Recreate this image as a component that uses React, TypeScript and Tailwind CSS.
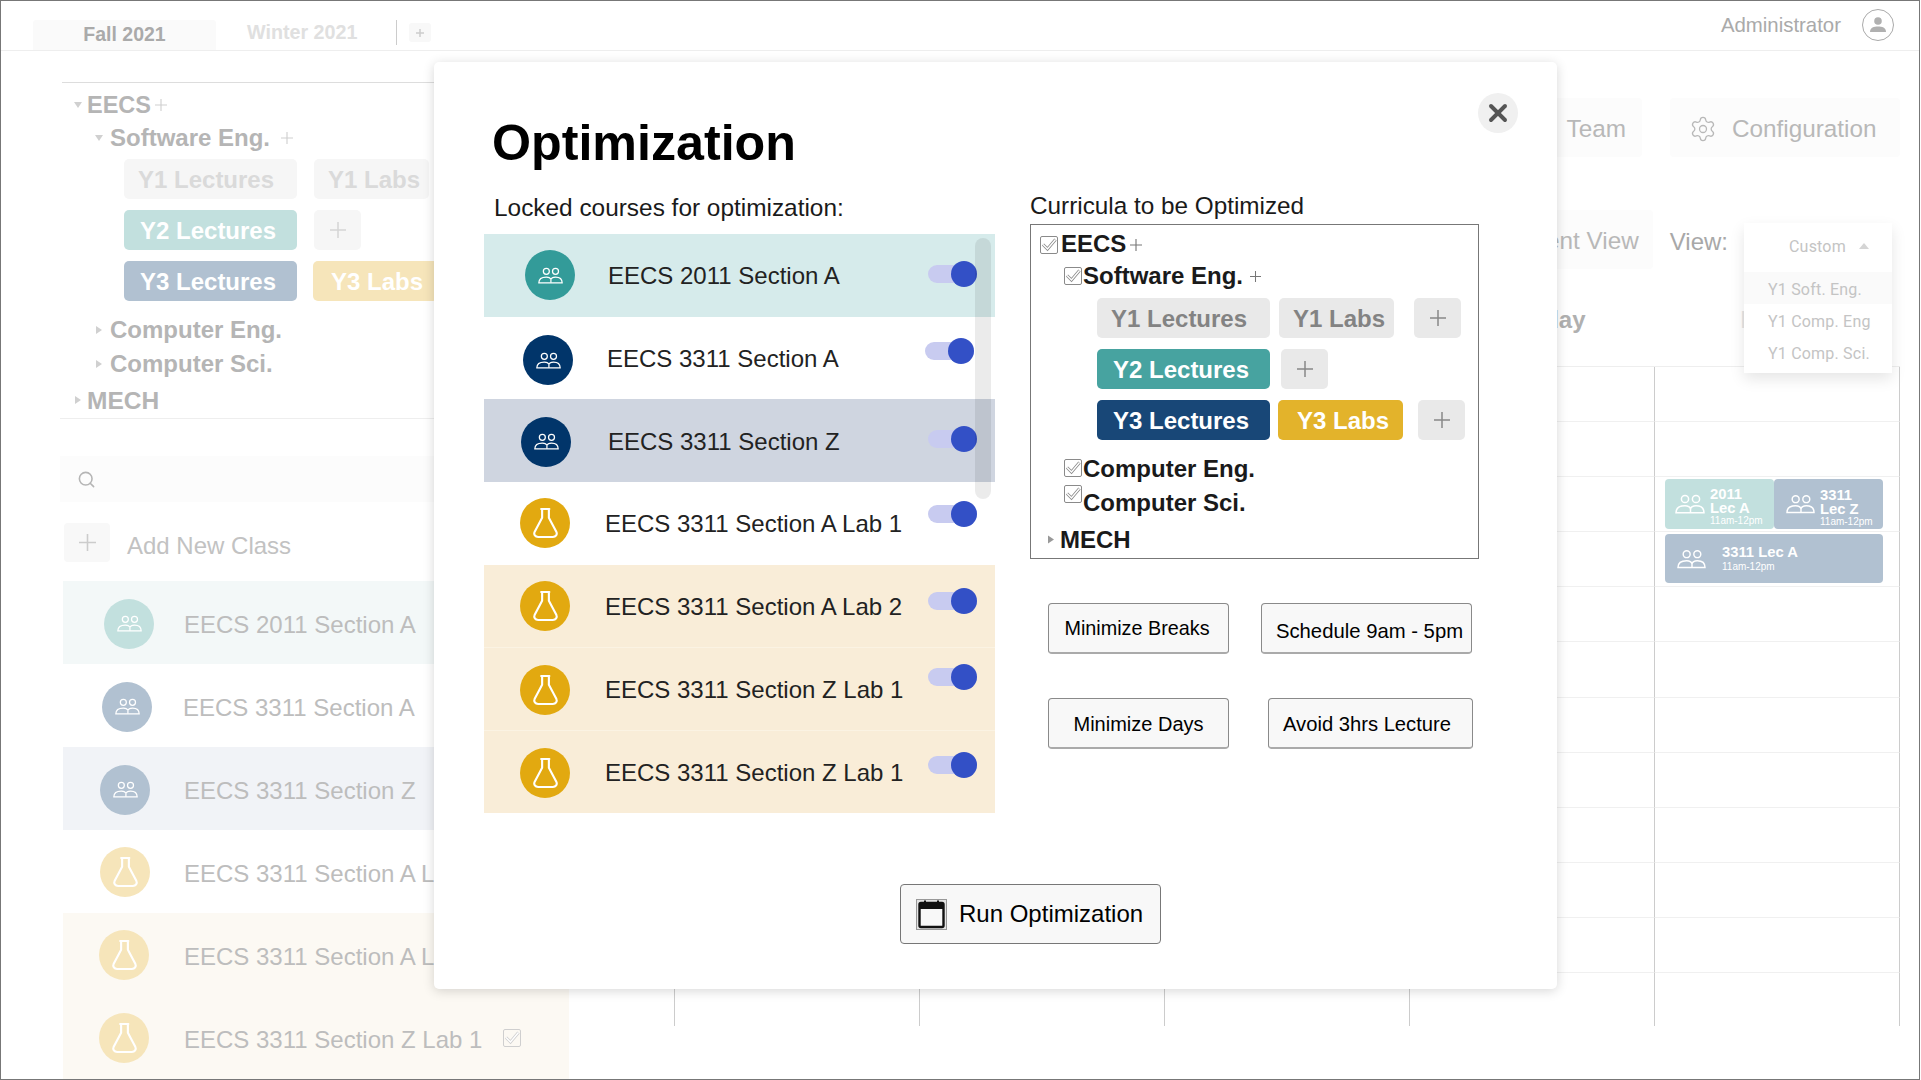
import React from "react";
import { Search, Settings, X } from "lucide-react";

const People = ({ className = "", stroke = "#fff" }: { className?: string; stroke?: string }) => (
  <svg viewBox="0 0 30 20" className={className} fill="none" stroke={stroke} strokeWidth="1.5">
    <circle cx="10" cy="5" r="3.6" />
    <circle cx="21" cy="5" r="3.6" />
    <path d="M1 18.8 C1 13.5 5 11.8 10 11.8 C13 11.8 15 13 15.5 15 C16 13 18 11.8 21 11.8 C26 11.8 29 13.5 29 18.8 Z" />
    <path d="M15.5 15 V18.8" />
  </svg>
);

const Flask = ({ className = "", stroke = "#fff" }: { className?: string; stroke?: string }) => (
  <svg viewBox="0 0 28 33" className={className} fill="none" stroke={stroke} strokeWidth="2.2" strokeLinejoin="round" strokeLinecap="round">
    <path d="M9.5 2 H18 M10.5 2 V11 L2.8 25.5 C1.4 28.6 3.4 31 6.4 31 H21.6 C24.6 31 26.6 28.6 25.2 25.5 L17.5 11 V2" />
  </svg>
);

const Check = ({ className = "", color = "#8a8a8a" }: { className?: string; color?: string }) => (
  <svg viewBox="0 0 18 18" className={className} fill="none">
    <rect x="0.5" y="0.5" width="17" height="17" rx="1.5" stroke={color} />
    <path d="M3 8.5 L7.5 13 L15.5 3.5" stroke={color} strokeWidth="3" />
    <path d="M3 8.5 L7.5 13 L15.5 3.5" stroke="#fff" strokeWidth="1.4" />
  </svg>
);

const PlusMark = ({ className = "", color = "#888", w = 1.5 }: { className?: string; color?: string; w?: number }) => (
  <svg viewBox="0 0 16 16" className={className} fill="none" stroke={color} strokeWidth={w}>
    <path d="M8 0 V16 M0 8 H16" />
  </svg>
);

const TriDown = ({ className = "" }: { className?: string }) => (
  <svg viewBox="0 0 8 6" className={className}><path d="M0 0 H8 L4 6 Z" fill="#d0d0d0" /></svg>
);
const TriRight = ({ className = "", color = "#d0d0d0" }: { className?: string; color?: string }) => (
  <svg viewBox="0 0 6 8" className={className}><path d="M0 0 L6 4 L0 8 Z" fill={color} /></svg>
);

type Row = { t: string; kind: "p" | "f"; bg: string; c: string; ic: string; tx: string; tg: string };

const sideRows: Row[] = [
  { t: "EECS 2011 Section A", kind: "p", bg: "bg-[#f3f8f8]", c: "bg-[#c2e0de]", ic: "ml-[41px] translate-y-[1px]", tx: "ml-[30px] translate-y-[2px]", tg: "" },
  { t: "EECS 3311 Section A", kind: "p", bg: "bg-white", c: "bg-[#b1c1d1]", ic: "ml-[39px] translate-y-[1px]", tx: "ml-[31px] translate-y-[2px]", tg: "" },
  { t: "EECS 3311 Section Z", kind: "p", bg: "bg-[#f1f3f7]", c: "bg-[#b1c1d1]", ic: "ml-[37px] translate-y-[1px]", tx: "ml-[34px] translate-y-[2px]", tg: "" },
  { t: "EECS 3311 Section A Lab 1", kind: "f", bg: "bg-white", c: "bg-[#f6e5ba]", ic: "ml-[37px]", tx: "ml-[34px] translate-y-[2px]", tg: "" },
  { t: "EECS 3311 Section A Lab 2", kind: "f", bg: "bg-[#fcf9f3]", c: "bg-[#f6e5ba]", ic: "ml-[36px]", tx: "ml-[35px] translate-y-[2px]", tg: "" },
  { t: "EECS 3311 Section Z Lab 1", kind: "f", bg: "bg-[#fcf9f3]", c: "bg-[#f6e5ba]", ic: "ml-[36px]", tx: "ml-[35px] translate-y-[2px]", tg: "" },
];

const modalRows: Row[] = [
  { t: "EECS 2011 Section A", kind: "p", bg: "bg-[#d6ebeb]", c: "bg-[#339b99]", ic: "ml-[41px]", tx: "ml-[33px] translate-y-[1px]", tg: "mr-[18px] -translate-y-[1px]" },
  { t: "EECS 3311 Section A", kind: "p", bg: "bg-white", c: "bg-[#01356a]", ic: "ml-[39px] translate-y-[2px]", tx: "ml-[34px] translate-y-[1px]", tg: "mr-[21px] -translate-y-[7px]" },
  { t: "EECS 3311 Section Z", kind: "p", bg: "bg-[#cfd5e0]", c: "bg-[#01356a]", ic: "ml-[37px] translate-y-[1px]", tx: "ml-[37px] translate-y-[1px]", tg: "mr-[18px] -translate-y-[2px]" },
  { t: "EECS 3311 Section A Lab 1", kind: "f", bg: "bg-white", c: "bg-[#e2a910]", ic: "ml-[36px]", tx: "ml-[35px] translate-y-[1px]", tg: "mr-[18px] -translate-y-[9px]" },
  { t: "EECS 3311 Section A Lab 2", kind: "f", bg: "bg-[#f9edd8]", c: "bg-[#e2a910]", ic: "ml-[36px]", tx: "ml-[35px] translate-y-[1px]", tg: "mr-[18px] -translate-y-[5px]" },
  { t: "EECS 3311 Section Z Lab 1", kind: "f", bg: "bg-[#f9edd8] border-t border-[#fbf3e3]", c: "bg-[#e2a910]", ic: "ml-[36px] translate-y-[1px]", tx: "ml-[35px] translate-y-[1px]", tg: "mr-[18px] -translate-y-[12px]" },
  { t: "EECS 3311 Section Z Lab 1", kind: "f", bg: "bg-[#f9edd8] border-t border-[#fbf3e3]", c: "bg-[#e2a910]", ic: "ml-[36px] translate-y-[1px]", tx: "ml-[35px] translate-y-[1px]", tg: "mr-[18px] -translate-y-[7px]" },
];

const RowIcon = ({ kind, c, ic }: { kind: "p" | "f"; c: string; ic: string }) => (
  <div className={`w-[50px] h-[50px] rounded-full flex items-center justify-center shrink-0 ${c} ${ic}`}>
    {kind === "p" ? <People className="w-[25px] h-[17px]" /> : <Flask className="w-[27px] h-[32px]" />}
  </div>
);

const Toggle = ({ cls }: { cls: string }) => (
  <div className={`ml-auto relative w-[49px] h-[18px] rounded-full bg-[#c8cbf0] ${cls}`}>
    <div className="absolute right-0 -top-[4px] w-[26px] h-[26px] rounded-full bg-[#3350c6]" />
  </div>
);

const Pill = ({ label, cls, pl }: { label: string; cls: string; pl: string }) => (
  <div className={`flex items-center pt-[2px] rounded-[5px] font-bold text-[24px] whitespace-nowrap ${cls} ${pl}`}>{label}</div>
);

const PlusBox = ({ cls, color }: { cls: string; color: string }) => (
  <div className={`flex items-center justify-center rounded-[5px] ${cls}`}>
    <PlusMark className="w-[16px] h-[16px]" color={color} />
  </div>
);

const OptBtn = ({ label, cls }: { label: string; cls: string }) => (
  <button className={`h-[51px] rounded-[4px] border border-[#8a8a8a] border-b-2 border-b-[#aaa] bg-[#f8f8f8] text-black whitespace-nowrap ${cls}`}>{label}</button>
);

const EventCard = ({ cls, children }: { cls: string; children: React.ReactNode }) => (
  <div className={`absolute flex items-center rounded-[4px] text-white ${cls}`}>{children}</div>
);

const days = ["", "", "", "Thursday", "Friday"];

export default function App() {
  return (
    <div className="relative w-[1920px] h-[1080px] overflow-hidden box-border border border-[#777] bg-white font-['Liberation_Sans',Arial,sans-serif] flex flex-col">
      {/* header */}
      <header className="h-[50px] shrink-0 box-border border-b border-[#eee] flex items-start pl-[32px] pr-[25px]">
        <div className="mt-[19px] w-[183px] h-[30px] bg-[#fafafa] rounded-t-[3px] flex items-center justify-center text-[19.5px] font-bold text-[#aaa]">Fall 2021</div>
        <div className="ml-[31px] mt-[19px] text-[19.7px] font-bold text-[#e0e0e0] leading-[24px]">Winter 2021</div>
        <div className="ml-[39px] mt-[19px] w-px h-[25px] bg-[#ccc]" />
        <div className="ml-[12px] mt-[22px] w-[22px] h-[19px] rounded-[3px] bg-[#f8f8f8] flex items-center justify-center">
          <PlusMark className="w-[8px] h-[8px]" color="#ccc" w={3} />
        </div>
        <div className="ml-auto mt-[8px] flex items-center">
          <span className="text-[20.4px] text-[#aaa] leading-[32px]">Administrator</span>
          <div className="ml-[21px] w-[32px] h-[32px] rounded-full border border-[#aaa] flex items-center justify-center">
            <svg viewBox="0 0 20 20" className="w-[20px] h-[20px]" fill="#b0b0b0">
              <circle cx="10" cy="6" r="3.8" />
              <path d="M2 17 C2 12.5 6 11.5 10 11.5 C14 11.5 18 12.5 18 17 Z" />
            </svg>
          </div>
        </div>
      </header>

      <div className="flex flex-1 min-h-0">
        {/* sidebar */}
        <aside className="w-[568px] shrink-0 flex flex-col">
          <div className="mt-[31px] ml-[61px] border-t border-[#ddd] flex flex-col">
            <div className="h-[44px] flex items-center text-[23.5px] font-bold text-[#b5b5b5]">
              <TriDown className="ml-[12px] w-[8px] h-[6px]" />
              <span className="ml-[5px] translate-y-[1px]">EECS</span>
              <PlusMark className="ml-[4px] w-[12px] h-[12px]" color="#cfcfcf" />
            </div>
            <div className="h-[21px] flex items-center text-[24px] font-bold text-[#b5b5b5]">
              <TriDown className="ml-[33px] w-[8px] h-[6px]" />
              <span className="ml-[7px]">Software Eng.</span>
              <PlusMark className="ml-[11px] w-[12px] h-[12px]" color="#cfcfcf" />
            </div>
            <div className="mt-[11px] ml-[62px] flex flex-col gap-[11px]">
              <div className="flex h-[40px]">
                <Pill label="Y1 Lectures" cls="w-[173px] bg-[#f6f6f6] text-[#dadada]" pl="pl-[14px]" />
                <Pill label="Y1 Labs" cls="ml-[17px] w-[115px] bg-[#f6f6f6] text-[#dadada]" pl="pl-[14px]" />
              </div>
              <div className="flex h-[40px]">
                <Pill label="Y2 Lectures" cls="w-[173px] bg-[#c2e0de] text-white" pl="pl-[16px]" />
                <PlusBox cls="ml-[17px] w-[47px] bg-[#f6f6f6]" color="#d5d5d5" />
              </div>
              <div className="flex h-[40px]">
                <Pill label="Y3 Lectures" cls="w-[173px] bg-[#b1c1d1] text-white" pl="pl-[16px]" />
                <Pill label="Y3 Labs" cls="ml-[16px] w-[125px] bg-[#f6e5ba] text-white" pl="pl-[18px]" />
              </div>
            </div>
            <div className="mt-[13px] h-[32px] flex items-center text-[24px] font-bold text-[#b5b5b5]">
              <TriRight className="ml-[34px] w-[6px] h-[8px]" />
              <span className="ml-[8px]">Computer Eng.</span>
            </div>
            <div className="h-[36px] flex items-center text-[24px] font-bold text-[#b5b5b5]">
              <TriRight className="ml-[34px] w-[6px] h-[8px]" />
              <span className="ml-[8px]">Computer Sci.</span>
            </div>
            <div className="h-[36px] flex items-center text-[24.5px] font-bold text-[#b5b5b5]">
              <TriRight className="ml-[13px] w-[6px] h-[8px]" />
              <span className="ml-[6px] translate-y-[1px]">MECH</span>
            </div>
          </div>
          <div className="ml-[59px] border-t border-[#eee]" />
          <div className="mt-[37px] ml-[59px] h-[48px] bg-[#fcfcfc] flex items-center pl-[17px]">
            <Search className="w-[19px] h-[19px] text-[#b5b5b5]" strokeWidth={2} />
          </div>
          <div className="mt-[21px] ml-[63px] h-[39px] flex items-center">
            <div className="w-[46px] h-[39px] rounded-[4px] bg-[#f8f8f8] flex items-center justify-center">
              <PlusMark className="w-[17px] h-[17px]" color="#ccc" />
            </div>
            <span className="ml-[17px] text-[24px] text-[#c2c2c2] translate-y-[3px]">Add New Class</span>
          </div>
          <div className="mt-[19px] ml-[62px] flex flex-col">
            {sideRows.map((r, i) => (
              <div key={i} className={`h-[83px] shrink-0 flex items-center ${r.bg}`}>
                <RowIcon kind={r.kind} c={r.c} ic={r.ic} />
                <span className={`text-[24px] text-[#bdbdbd] whitespace-nowrap ${r.tx}`}>{r.t}</span>
                {i === 5 && <Check className="ml-[21px] w-[18px] h-[18px]" color="#cfcfcf" />}
              </div>
            ))}
          </div>
        </aside>

        {/* main */}
        <main className="flex-1 min-w-0 flex flex-col">
          <div className="mt-[47px] h-[59px] flex justify-end pr-[19px]">
            <div className="w-[150px] bg-[#fcfcfc] rounded-[4px] flex items-center justify-end pr-[16px] text-[24.3px] text-[#b8b8b8]"><span className="translate-y-[2px]">Team</span></div>
            <div className="ml-[28px] w-[230px] bg-[#fcfcfc] rounded-[4px] flex items-center pl-[19px] text-[24.3px] text-[#b8b8b8]">
              <Settings className="w-[28px] h-[28px] translate-y-[1px]" strokeWidth={1.1} />
              <span className="ml-[15px] translate-y-[2px]">Configuration</span>
            </div>
          </div>
          <div className="mt-[53px] h-[59px] flex items-center justify-end pr-[27px]">
            <div className="h-full w-[180px] bg-[#fcfcfc] rounded-[4px] flex items-center justify-end pr-[14px] text-[24.3px] text-[#b8b8b8]"><span className="translate-y-[2px]">Current View</span></div>
            <span className="ml-[17px] text-[24px] text-[#a8a8a8] translate-y-[2px]">View:</span>
            <div className="ml-[16px] relative w-[148px] h-full">
              <div className="absolute left-0 top-[13px] w-[148px] h-[150px] bg-white shadow-[0_6px_14px_rgba(0,0,0,0.1)] font-['Roboto',sans-serif] text-[16px] text-[#c4c4c4] tracking-[0.2px]">
                <div className="h-[49px] flex items-center pl-[45px]">
                  <span className="-translate-y-[1px]">Custom</span>
                  <svg viewBox="0 0 10 6" className="ml-[13px] -mt-[4px] w-[10px] h-[6px]"><path d="M0 6 L5 0 L10 6 Z" fill="#d5d5d5" /></svg>
                </div>
                <div className="h-[32px] bg-[#fafafa] flex items-center pl-[24px] pt-[3px]">Y1 Soft. Eng.</div>
                <div className="h-[32px] flex items-center pl-[24px] pt-[3px] overflow-hidden whitespace-nowrap pr-[24px]">Y1 Comp. Eng</div>
                <div className="h-[32px] flex items-center pl-[24px] pt-[3px] overflow-hidden whitespace-nowrap pr-[24px]">Y1 Comp. Sci.</div>
              </div>
            </div>
          </div>
          <div className="ml-[105px] h-[97px] pt-[5px] grid grid-cols-[repeat(5,245px)]">
            {days.map((d, i) => (
              <div key={i} className={`flex items-center justify-center text-[24px] font-bold ${i === 4 ? "text-[#e4e4e4]" : "text-[#b0b0b0]"}`}>{d}</div>
            ))}
          </div>
          <div className="ml-[105px] grid grid-cols-[repeat(5,245px)] border-t border-[#eee] w-[1226px]">
            {Array.from({ length: 60 }).map((_, k) => {
              const r = Math.floor(k / 5);
              const c = k % 5;
              return (
                <div
                  key={k}
                  className={`relative box-border border-l border-[#ccc] ${r < 11 ? "h-[55.1px] border-b border-b-[#f0f0f0]" : "h-[53px]"} ${c === 4 ? "border-r border-r-[#ccc] w-[246px]" : ""}`}
                >
                  {r === 2 && c === 4 && (
                    <>
                      <EventCard cls="left-[10px] top-[2px] w-[109px] h-[50px] bg-[#c2e0de]">
                        <People className="ml-[10px] w-[30px] h-[20px] shrink-0" />
                        <div className="ml-[5px] font-bold text-[14.8px] leading-[14px] translate-y-[3px]">
                          <div>2011</div>
                          <div>Lec A</div>
                          <div className="font-normal text-[10px] leading-[12px]">11am-12pm</div>
                        </div>
                      </EventCard>
                      <EventCard cls="left-[119px] top-[2px] w-[109px] h-[50px] bg-[#b1c1d1]">
                        <People className="ml-[12px] w-[29px] h-[20px] shrink-0" />
                        <div className="ml-[5px] font-bold text-[14.8px] leading-[14px] translate-y-[4px]">
                          <div>3311</div>
                          <div>Lec Z</div>
                          <div className="font-normal text-[10px] leading-[12px]">11am-12pm</div>
                        </div>
                      </EventCard>
                    </>
                  )}
                  {r === 3 && c === 4 && (
                    <EventCard cls="left-[10px] top-[2px] w-[218px] h-[49px] bg-[#b1c1d1]">
                      <People className="ml-[12px] w-[29px] h-[20px] shrink-0" />
                      <div className="ml-[16px] font-bold text-[14.8px] leading-[16px]">
                        <div>3311 Lec A</div>
                        <div className="font-normal text-[10px] leading-[14px]">11am-12pm</div>
                      </div>
                    </EventCard>
                  )}
                </div>
              );
            })}
          </div>
        </main>
      </div>

      {/* modal */}
      <section className="absolute left-[433px] top-[61px] w-[1123px] h-[927px] bg-white rounded-[5px] shadow-[0_2px_12px_rgba(0,0,0,0.16)]">
        <button className="absolute right-[39px] top-[31px] w-[40px] h-[40px] rounded-full bg-[#f0f0f0] flex items-center justify-center">
          <X className="w-[28px] h-[28px] text-[#555]" strokeWidth={3.4} />
        </button>
        <div className="h-[128px] pt-[51px] pl-[58px]">
          <h1 className="text-[50.2px] leading-[60px] font-bold text-black">Optimization</h1>
        </div>
        <div className="flex h-[623px]">
          <div className="ml-[50px] w-[511px] flex flex-col">
            <div className="mt-[3px] h-[30px] pl-[10px] text-[24.4px] leading-[30px] text-[#1a1a1a]">Locked courses for optimization:</div>
            <div className="relative mt-[11px] flex flex-col">
              {modalRows.map((r, i) => (
                <div key={i} className={`h-[82.7px] box-border flex items-center ${r.bg}`}>
                  <RowIcon kind={r.kind} c={r.c} ic={r.ic} />
                  <span className={`text-[24px] text-[#222] whitespace-nowrap ${r.tx}`}>{r.t}</span>
                  <Toggle cls={r.tg} />
                </div>
              ))}
              <div className="absolute right-[4px] top-[4px] w-[16px] h-[261px] rounded-full bg-black/[0.08]" />
            </div>
          </div>
          <div className="ml-[35px] w-[450px] flex flex-col">
            <div className="h-[32px] leading-[32px] text-[24.3px] text-[#1a1a1a]">Curricula to be Optimized</div>
            <div className="mt-[2px] h-[335px] w-[449px] box-border border border-[#777] flex flex-col text-[#1a1a1a] font-bold">
              <div className="mt-[10px] h-[20px] ml-[9px] flex items-center text-[24px]">
                <Check className="w-[18px] h-[18px]" />
                <span className="ml-[3px] -translate-y-[1px]">EECS</span>
                <PlusMark className="ml-[4px] w-[12px] h-[12px]" color="#777" />
              </div>
              <div className="mt-[11px] h-[20px] ml-[33px] flex items-center text-[24px]">
                <Check className="w-[18px] h-[18px]" />
                <span className="ml-[1px]">Software Eng.</span>
                <PlusMark className="ml-[7px] w-[11px] h-[11px]" color="#777" />
              </div>
              <div className="mt-[12px] ml-[66px] flex flex-col gap-[11px]">
                <div className="flex h-[40px]">
                  <Pill label="Y1 Lectures" cls="w-[173px] bg-[#e9e9e9] text-[#838383]" pl="pl-[14px]" />
                  <Pill label="Y1 Labs" cls="ml-[9px] w-[115px] bg-[#e9e9e9] text-[#838383]" pl="pl-[14px]" />
                  <PlusBox cls="ml-[20px] w-[47px] bg-[#e9e9e9]" color="#888" />
                </div>
                <div className="flex h-[40px]">
                  <Pill label="Y2 Lectures" cls="w-[173px] bg-[#47a3a0] text-white" pl="pl-[16px]" />
                  <PlusBox cls="ml-[11px] w-[47px] bg-[#e9e9e9]" color="#888" />
                </div>
                <div className="flex h-[40px]">
                  <Pill label="Y3 Lectures" cls="w-[173px] bg-[#184777] text-white" pl="pl-[16px]" />
                  <Pill label="Y3 Labs" cls="ml-[8px] w-[125px] bg-[#e3b32b] text-white" pl="pl-[19px]" />
                  <PlusBox cls="ml-[15px] w-[47px] bg-[#e9e9e9]" color="#888" />
                </div>
              </div>
              <div className="mt-[18px] h-[20px] ml-[33px] flex items-center text-[24px]">
                <Check className="w-[18px] h-[18px]" />
                <span className="ml-[1px] translate-y-[1px]">Computer Eng.</span>
              </div>
              <div className="mt-[7px] h-[20px] ml-[33px] flex items-start text-[24px]">
                <Check className="w-[18px] h-[18px]" />
                <span className="ml-[1px] leading-[34px] h-[34px] translate-y-[1px]">Computer Sci.</span>
              </div>
              <div className="mt-[25px] h-[20px] ml-[17px] flex items-center text-[24px]">
                <TriRight className="w-[6px] h-[9px] -translate-y-[1px]" color="#999" />
                <span className="ml-[6px]">MECH</span>
              </div>
            </div>
            <div className="mt-[44px] flex">
              <OptBtn label="Minimize Breaks" cls="ml-[18px] w-[181px] pr-[3px] pt-[2px] text-[19.8px]" />
              <OptBtn label="Schedule 9am - 5pm" cls="ml-[32px] w-[211px] pl-[6px] pt-[6px] text-[20.3px]" />
            </div>
            <div className="mt-[44px] flex">
              <OptBtn label="Minimize Days" cls="ml-[18px] w-[181px] pt-[2px] text-[20px]" />
              <OptBtn label="Avoid 3hrs Lecture" cls="ml-[39px] w-[205px] pr-[7px] pt-[2px] text-[20.2px]" />
            </div>
          </div>
        </div>
        <button className="mt-[71px] ml-[466px] w-[261px] h-[60px] rounded-[4px] border border-[#777] bg-[#f8f8f8] flex items-center pl-[15px]">
          <svg viewBox="0 0 31 31" className="w-[31px] h-[31px] shrink-0">
            <rect x="0.5" y="0.5" width="30" height="30" fill="#e4e4e4" stroke="#999" />
            <rect x="3.5" y="4" width="24" height="24" rx="1.5" fill="#f8f8f8" stroke="#111" strokeWidth="2.4" />
            <rect x="3" y="4" width="25" height="6" fill="#111" />
            <rect x="8" y="1.5" width="2" height="3" fill="#111" />
            <rect x="21" y="1.5" width="2" height="3" fill="#111" />
          </svg>
          <span className="ml-[12px] text-[24px] text-black">Run Optimization</span>
        </button>
      </section>
    </div>
  );
}
